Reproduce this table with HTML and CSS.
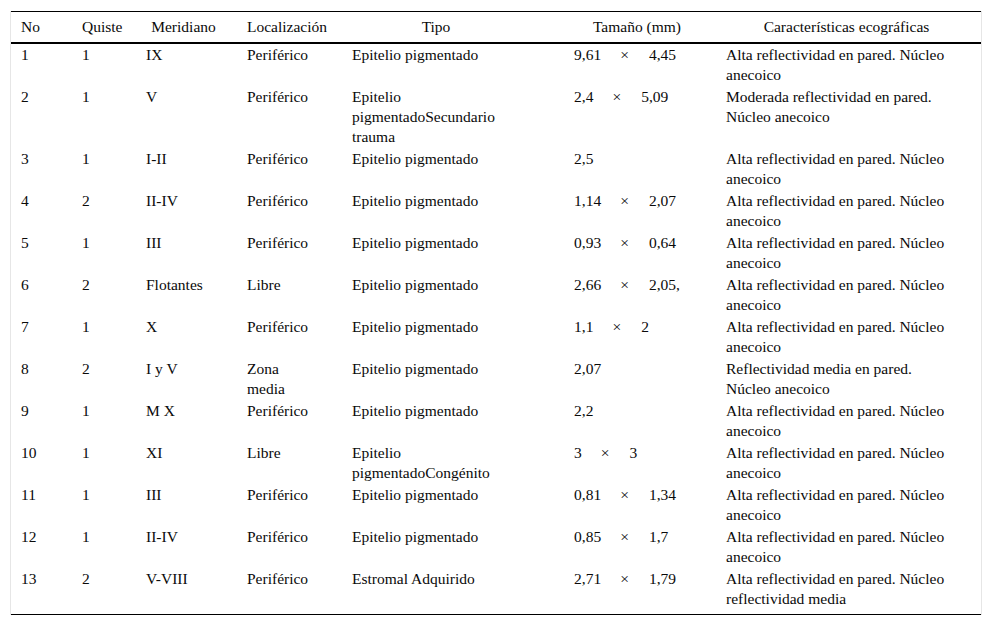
FILE: index.html
```html
<!DOCTYPE html>
<html lang="es">
<head>
<meta charset="utf-8">
<title>Tabla</title>
<link rel="stylesheet" href="styles.css">
</head>
<body>
<div class="frame">
<table class="data">
  <colgroup>
    <col class="c-no"><col class="c-quiste"><col class="c-mer"><col class="c-loc"><col class="c-tipo"><col class="c-tam"><col class="c-car">
  </colgroup>
  <thead>
    <tr>
      <th class="h-left">No</th>
      <th class="h-left">Quiste</th>
      <th class="h-mer">Meridiano</th>
      <th class="h-left">Localización</th>
      <th class="h-tipo">Tipo</th>
      <th class="h-tam">Tamaño (mm)</th>
      <th class="h-car">Características ecográficas</th>
    </tr>
  </thead>
  <tbody>
    <tr><td>1</td><td>1</td><td>IX</td><td>Periférico</td><td>Epitelio pigmentado</td><td>9,61<span class="x">×</span>4,45</td><td>Alta reflectividad en pared. Núcleo<br>anecoico</td></tr>
    <tr><td>2</td><td>1</td><td>V</td><td>Periférico</td><td>Epitelio<br>pigmentadoSecundario<br>trauma</td><td>2,4<span class="x">×</span>5,09</td><td>Moderada reflectividad en pared.<br>Núcleo anecoico</td></tr>
    <tr><td>3</td><td>1</td><td>I-II</td><td>Periférico</td><td>Epitelio pigmentado</td><td>2,5</td><td>Alta reflectividad en pared. Núcleo<br>anecoico</td></tr>
    <tr><td>4</td><td>2</td><td>II-IV</td><td>Periférico</td><td>Epitelio pigmentado</td><td>1,14<span class="x">×</span>2,07</td><td>Alta reflectividad en pared. Núcleo<br>anecoico</td></tr>
    <tr><td>5</td><td>1</td><td>III</td><td>Periférico</td><td>Epitelio pigmentado</td><td>0,93<span class="x">×</span>0,64</td><td>Alta reflectividad en pared. Núcleo<br>anecoico</td></tr>
    <tr><td>6</td><td>2</td><td>Flotantes</td><td>Libre</td><td>Epitelio pigmentado</td><td>2,66<span class="x">×</span>2,05,</td><td>Alta reflectividad en pared. Núcleo<br>anecoico</td></tr>
    <tr><td>7</td><td>1</td><td>X</td><td>Periférico</td><td>Epitelio pigmentado</td><td>1,1<span class="x">×</span>2</td><td>Alta reflectividad en pared. Núcleo<br>anecoico</td></tr>
    <tr><td>8</td><td>2</td><td>I y V</td><td>Zona<br>media</td><td>Epitelio pigmentado</td><td>2,07</td><td>Reflectividad media en pared.<br>Núcleo anecoico</td></tr>
    <tr><td>9</td><td>1</td><td>M X</td><td>Periférico</td><td>Epitelio pigmentado</td><td>2,2</td><td>Alta reflectividad en pared. Núcleo<br>anecoico</td></tr>
    <tr><td>10</td><td>1</td><td>XI</td><td>Libre</td><td>Epitelio<br>pigmentadoCongénito</td><td>3<span class="x">×</span>3</td><td>Alta reflectividad en pared. Núcleo<br>anecoico</td></tr>
    <tr><td>11</td><td>1</td><td>III</td><td>Periférico</td><td>Epitelio pigmentado</td><td>0,81<span class="x">×</span>1,34</td><td>Alta reflectividad en pared. Núcleo<br>anecoico</td></tr>
    <tr><td>12</td><td>1</td><td>II-IV</td><td>Periférico</td><td>Epitelio pigmentado</td><td>0,85<span class="x">×</span>1,7</td><td>Alta reflectividad en pared. Núcleo<br>anecoico</td></tr>
    <tr class="last"><td>13</td><td>2</td><td>V-VIII</td><td>Periférico</td><td>Estromal Adquirido</td><td>2,71<span class="x">×</span>1,79</td><td>Alta reflectividad en pared. Núcleo<br>reflectividad media</td></tr>
  </tbody>
</table>
</div>
</body>
</html>
```
FILE: styles.css
```css
html, body {
  margin: 0;
  padding: 0;
  background: #ffffff;
}

body {
  font-family: "Liberation Serif", "Times New Roman", serif;
  font-size: 15.5px;
  line-height: 20px;
  color: #0a0a0a;
}

.frame {
  margin: 11px 0 0 10px;
  width: 970px;
  border-left: 1px solid #e6e6e6;
  border-right: 1px solid #e6e6e6;
}

.data {
  width: 970px;
  table-layout: fixed;
  border-collapse: separate;
  border-spacing: 0;
  border-top: 1px solid #000000;
  border-bottom: 1px solid #000000;
}

.c-no { width: 61px; }
.c-quiste { width: 64px; }
.c-mer { width: 101px; }
.c-loc { width: 105px; }
.c-tipo { width: 222px; }
.c-tam { width: 152px; }
.c-car { width: 265px; }

.data th {
  font-weight: normal;
  padding: 5px 10px;
  border-bottom: 2px solid #000000;
  vertical-align: top;
  white-space: nowrap;
}

.data th.h-left { text-align: left; }

.data th.h-mer {
  text-align: center;
  padding-right: 16px;
}

.data th.h-tipo {
  text-align: center;
  padding-right: 44px;
}

.data th.h-tam {
  text-align: center;
  padding-right: 16px;
}

.data th.h-car {
  text-align: center;
  padding-right: 14px;
}

.data td {
  padding: 1px 10px;
  vertical-align: top;
  text-align: left;
  white-space: nowrap;
}

.data tr.last td {
  padding-bottom: 5px;
}

.x {
  display: inline-block;
  margin: 0 20px 0 19px;
}
```
